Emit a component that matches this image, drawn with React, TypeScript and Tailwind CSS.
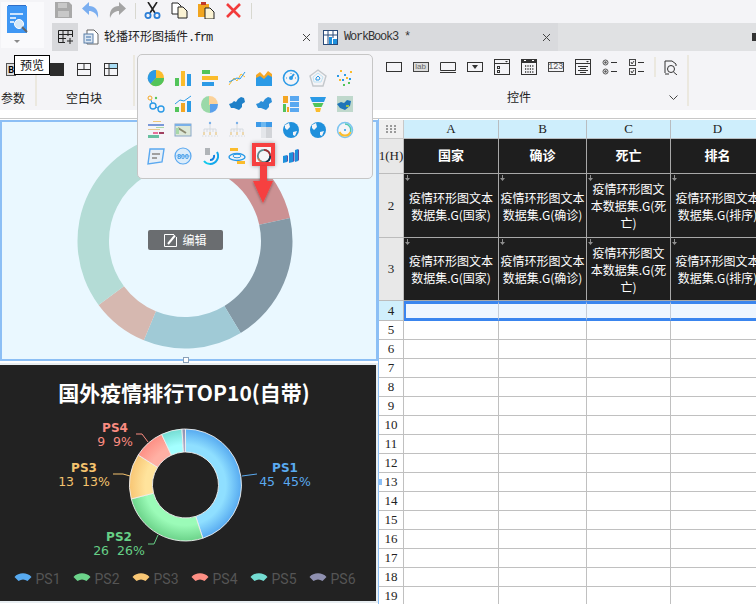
import React from "react";

const CJK = '"Noto Sans CJK SC", sans-serif';

function pt(cx: number, cy: number, r: number, a: number) {
  const t = ((a - 90) * Math.PI) / 180;
  return [cx + r * Math.cos(t), cy + r * Math.sin(t)];
}
function arc(cx: number, cy: number, r0: number, r1: number, a0: number, a1: number) {
  const [x1, y1] = pt(cx, cy, r1, a0);
  const [x2, y2] = pt(cx, cy, r1, a1);
  const [x3, y3] = pt(cx, cy, r0, a1);
  const [x4, y4] = pt(cx, cy, r0, a0);
  const l = a1 - a0 > 180 ? 1 : 0;
  return `M${x1} ${y1}A${r1} ${r1} 0 ${l} 1 ${x2} ${y2}L${x3} ${y3}A${r0} ${r0} 0 ${l} 0 ${x4} ${y4}Z`;
}

const S = ({ children, w = 18, h = 18 }: { children: React.ReactNode; w?: number; h?: number }) => (
  <svg width={w} height={h} viewBox={`0 0 ${w} ${h}`} fill="none" className="block shrink-0">
    {children}
  </svg>
);

const C = { b: "#2b9ae6", g: "#52c45a", y: "#fbbc2c", o: "#f4a623", k: "#333", l: "#5aa8f0" };

const popupIcons: React.ReactNode[] = [
  <S key="1"><circle cx="9" cy="9" r="8" fill={C.y} /><path d="M9 9L9 1A8 8 0 0 0 3.5 15Z" fill={C.b} /><path d="M9 9L3.5 15A8 8 0 0 0 17 9Z" fill={C.g} /></S>,
  <S key="2"><rect x="1" y="9" width="4" height="8" fill={C.g} /><rect x="7" y="2" width="4" height="15" fill={C.y} /><rect x="13" y="5" width="4" height="12" fill={C.b} /></S>,
  <S key="3"><rect x="1" y="1" width="8" height="4" fill={C.g} /><rect x="1" y="7" width="16" height="4" fill={C.y} /><rect x="1" y="13" width="12" height="4" fill={C.b} /></S>,
  <S key="4"><path d="M1 16L6 9L9 12L13 5L17 8" stroke={C.y} /><path d="M1 13L5 11L9 9L12 10L17 3" stroke={C.b} /></S>,
  <S key="5"><path d="M1 6L5 3L9 7L13 2L17 5V11H1Z" fill={C.o} /><path d="M1 9L5 7L9 10L13 6L17 8V17H1Z" fill={C.b} /></S>,
  <S key="6"><circle cx="9" cy="9" r="7.5" stroke={C.b} strokeWidth="1.6" /><path d="M9 9L12 5" stroke={C.b} strokeWidth="2" /><circle cx="9" cy="9" r="2" fill={C.b} /><path d="M4 9H5M13 9H14M9 4V5" stroke={C.b} /></S>,
  <S key="7"><path d="M9 1L17 7L14 17H4L1 7Z" stroke="#c4c8cc" strokeWidth="1.4" /><path d="M9 4L14 8L12 13L5 13L4 8Z" stroke="#bfe2f2" /><path d="M9 7L11 9L10 11H7L7 9Z" stroke={C.b} /></S>,
  <S key="8"><g fill={C.b}><rect x="1" y="6" width="2" height="2" /><rect x="8" y="5" width="2" height="2" /><rect x="6" y="10" width="2" height="2" /><rect x="13" y="9" width="2" height="2" /></g><g fill={C.y}><rect x="4" y="1" width="2" height="2" /><rect x="14" y="2" width="2" height="2" /><rect x="3" y="10" width="2" height="2" /><rect x="10" y="8" width="2" height="2" /></g><g fill={C.g}><rect x="7" y="15" width="2" height="2" /><rect x="12" y="13" width="2" height="2" /></g></S>,
  <S key="9"><circle cx="3" cy="3" r="2" stroke={C.o} /><circle cx="9" cy="3" r="1.2" fill={C.g} /><circle cx="6" cy="11" r="3" stroke={C.b} strokeWidth="1.4" /><circle cx="14" cy="14" r="3" stroke={C.b} strokeWidth="1.4" /><path d="M4 5L5 8M8 12L11 13" stroke={C.b} /></S>,
  <S key="10"><rect x="1" y="12" width="4" height="5" fill={C.g} /><rect x="7" y="8" width="4" height="9" fill={C.o} /><rect x="13" y="6" width="4" height="11" fill={C.b} /><path d="M1 9L6 5L10 6L17 1" stroke={C.b} /></S>,
  <div key="11" className="h-[17px] w-[17px] rounded-full bg-[conic-gradient(#fbd29a_0deg,#fbd29a_90deg,#5aa0ea_90deg,#5aa0ea_180deg,#9ad9a8_180deg,#9ad9a8_360deg)] blur-[0.6px]" />,
  <S key="12"><path d="M1 9L4 8L6 6L8 7L10 4L13 2L16 3L17 7L14 9L14 12L11 15L6 13L3 13Z" fill="#1f80c8" /></S>,
  <S key="13"><path d="M1 9L4 8L6 6L8 7L10 4L13 2L16 3L17 7L14 9L14 12L11 15L6 13L3 13Z" fill="#2b8ed8" /></S>,
  <S key="14"><rect x="1" y="1" width="5" height="7" fill={C.o} /><rect x="1" y="9" width="3" height="8" fill={C.g} /><rect x="5" y="12" width="2" height="5" fill={C.o} /><rect x="8" y="1" width="9" height="5" fill={C.l} /><rect x="8" y="7" width="9" height="5" fill={C.l} /><rect x="8" y="13" width="9" height="4" fill={C.l} /></S>,
  <S key="15"><path d="M1 2H17L15 7H3Z" fill={C.b} /><path d="M3.5 8H14.5L12.5 12H5.5Z" fill={C.g} /><path d="M6 13H12L11 17H7Z" fill={C.y} /></S>,
  <S key="16"><rect x="1" y="1" width="16" height="16" fill="#bfd8cc" /><path d="M1 9L5 7L8 8L11 5L15 6L14 11L9 15L4 13Z" fill="#1f74b8" /><rect x="10" y="10" width="3" height="2" fill="#9bc04a" /></S>,
  <S key="17"><rect x="6" y="0" width="8" height="1" fill="#f0c878" /><rect x="1" y="3" width="16" height="2" fill="#7a98d8" /><rect x="9" y="6" width="8" height="1" fill="#a8d8a8" /><rect x="1" y="8" width="12" height="1" fill="#e8c890" /><rect x="6" y="11" width="5" height="2" fill="#e8709a" /><rect x="12" y="11" width="5" height="2" fill="#a04060" /><rect x="1" y="14" width="11" height="3" fill="#68c0a0" /></S>,
  <S key="18"><rect x="1" y="3" width="16" height="12" fill="#dde8d8" stroke="#8aa8c8" /><rect x="1" y="3" width="16" height="2" fill="#7ab0e8" /><path d="M4 7L12 12" stroke="#8a8a70" strokeWidth="2" /><rect x="2" y="7" width="3" height="6" fill="#a8d8a8" /></S>,
  <S key="19"><g stroke="#cfd6dc" strokeWidth="0.8"><path d="M9 3V7M3 11V8H15V11M9 7V11M6 8V11M12 8V11" /><path d="M1 15H17" strokeDasharray="1.5 1.5" /></g><circle cx="9" cy="2" r="1.2" fill="#7ab0e8" /><g fill="#ecd8b0"><rect x="2" y="11" width="2" height="3" /><rect x="8" y="11" width="2" height="3" /><rect x="14" y="11" width="2" height="3" /></g></S>,
  <S key="20"><g stroke="#cfd6dc" strokeWidth="0.8"><path d="M9 3V7M3 11V8H15V11M9 7V11M6 8V11M12 8V11" /><path d="M1 15H17" strokeDasharray="1.5 1.5" /></g><circle cx="9" cy="2" r="1.2" fill="#7ab0e8" /><g fill="#ecd8b0"><rect x="2" y="11" width="2" height="3" /><rect x="8" y="11" width="2" height="3" /><rect x="14" y="11" width="2" height="3" /></g></S>,
  <S key="21"><rect x="1" y="1" width="16" height="16" fill="#e4e6ea" /><rect x="1" y="1" width="16" height="5" fill="#3d9ae8" /><rect x="6" y="1" width="5" height="5" fill="#6eb8f0" /><rect x="1" y="6" width="5" height="11" fill="#f4f4f7" /><rect x="11" y="6" width="6" height="11" fill="#d2d4d8" /></S>,
  <S key="22"><circle cx="9" cy="9" r="8" fill="#1f90dc" /><path d="M3 4L7 2L8 6L5 9L3 7ZM11 11L15 10L13 15L11 14Z" fill="#f4f4f7" /></S>,
  <S key="23"><circle cx="9" cy="9" r="8" fill="#1f90dc" /><path d="M3 4L7 2L8 6L5 9L3 7ZM11 11L15 10L13 15L11 14Z" fill="#f4f4f7" /></S>,
  <S key="24"><circle cx="9" cy="9" r="7.5" stroke="#7cc4f0" strokeWidth="1.5" /><path d="M3.5 11A6 6 0 0 0 14.5 11" stroke={C.y} strokeWidth="2" /><path d="M14.5 11A6 6 0 0 0 9 3" stroke="#50c8b0" strokeWidth="1.5" /><circle cx="9" cy="9" r="1" fill={C.b} /></S>,
  <S key="25"><path d="M3 2H17L15 15L1 17Z" fill="#e8eff6" stroke={C.l} strokeWidth="1.4" /><rect x="5" y="6" width="8" height="2" fill="#a0a0a0" /><rect x="5" y="10" width="5" height="2" fill="#a0a0a0" /></S>,
  <S key="26"><circle cx="9" cy="9" r="8" stroke={C.l} strokeWidth="1.2" fill="#dbecfa" /><path d="M1 9H17" stroke={C.l} strokeWidth="0.6" /><text x="9" y="12" textAnchor="middle" fontSize="7" fontWeight="700" fill="#3d9ae8" fontFamily="Liberation Sans">800</text></S>,
  <S key="27"><path d="M9 17A8 8 0 0 0 16 5" stroke="#12a8ec" strokeWidth="2" /><path d="M9 17A8 8 0 0 1 3 14" stroke="#12c8ec" strokeWidth="2" /><path d="M9 13A4 4 0 0 0 13 8" stroke="#1280e0" strokeWidth="2" /><rect x="4" y="1" width="5" height="7" fill="#b0b4b8" /></S>,
  <S key="28"><ellipse cx="9" cy="10" rx="8" ry="3.5" stroke="#2b9ae6" strokeWidth="1.4" /><ellipse cx="9" cy="9" rx="4" ry="1.8" stroke="#2b9ae6" /><rect x="2" y="1" width="8" height="3" fill={C.y} /><rect x="9" y="14" width="8" height="3" fill={C.y} /></S>,
  <S key="29"><circle cx="9" cy="9" r="6.2" stroke="#5b8a8e" strokeWidth="1.8" /><path d="M9 2.8A6.2 6.2 0 0 1 15.2 9" stroke="#a02c30" strokeWidth="1.8" /><path d="M15.2 9A6.2 6.2 0 0 1 10.8 15" stroke="#16324a" strokeWidth="1.8" /><path d="M6.5 14.7A6.2 6.2 0 0 1 3.2 11.5" stroke="#c87a50" strokeWidth="1.8" /></S>,
  <S key="30"><path d="M1 9L5 8V15L1 16Z" fill="#1e90dc" /><path d="M7 6L11 5V15L7 16Z" fill="#1e90dc" /><path d="M13 3L16 2V14L13 15Z" fill="#1e90dc" /><path d="M11 5L12.5 6V14L11 15Z" fill="#5a50a8" /><path d="M16 2L17 3V13L16 14Z" fill="#5a50a8" /><path d="M5 8L6 9V14L5 15Z" fill="#5a50a8" /></S>,
];

const ribbonRight: React.ReactNode[] = [
  <S key="a" w={16} h={10}><rect x="0.5" y="0.5" width="15" height="9" stroke={C.k} /></S>,
  <div key="b" className="flex h-[10px] w-4 items-center justify-center border border-[#444] bg-[#ddd] text-[8px] leading-none text-[#666] [font-family:'Liberation_Sans',sans-serif]">lab</div>,
  <S key="c" w={16} h={11}><path d="M0.5 8.5V0.5H15.5V8.5H0.5M0 10.5H16" stroke={C.k} /></S>,
  <S key="d" w={16} h={10}><rect x="0.5" y="0.5" width="15" height="9" stroke={C.k} /><path d="M5 3H11L8 7Z" fill={C.k} /></S>,
  <S key="e" w={16} h={16}><rect x="0.5" y="0.5" width="15" height="15" stroke={C.k} /><path d="M0 4.5H16" stroke={C.k} /><path d="M11 2H14L12.5 3.5Z" fill={C.k} /><rect x="3.5" y="7.5" width="2" height="2" stroke={C.k} /><rect x="3.5" y="11.5" width="2" height="2" stroke={C.k} /></S>,
  <S key="f" w={16} h={16}><rect x="0.5" y="0.5" width="15" height="15" stroke={C.k} /><rect x="0" y="0" width="16" height="4" fill={C.k} /><rect x="3" y="1" width="2" height="1" fill="#fff" /><rect x="11" y="1" width="2" height="1" fill="#fff" /><path d="M4 7H13M4 10H13M4 13H13" stroke={C.k} strokeDasharray="1.2 1.2" strokeWidth="1.4" /></S>,
  <div key="g" className="flex h-[10px] w-4 items-center justify-center border border-[#444] text-[9px] leading-none text-[#555] [font-family:'Liberation_Mono',monospace] tracking-[-0.4px]">123</div>,
  <S key="h" w={16} h={16}><rect x="0.5" y="0.5" width="15" height="15" stroke={C.k} /><path d="M0 4.5H16" stroke={C.k} /><path d="M11 2H14L12.5 3.5Z" fill={C.k} /><path d="M3 7.5H13M5 9.5H11M3 11.5H13M5 13.5H11" stroke={C.k} /></S>,
  <S key="i" w={16} h={16}><circle cx="3.5" cy="3.5" r="2.5" stroke="#555" /><circle cx="3.5" cy="3.5" r="1.2" fill="#555" /><circle cx="3.5" cy="12.5" r="2.5" stroke="#555" /><circle cx="3.5" cy="12.5" r="1.2" fill="#555" /><path d="M9 3.5H15M9 12.5H15" stroke={C.k} /></S>,
  <S key="j" w={16} h={16}><rect x="0.5" y="0.5" width="6" height="6" stroke="#444" /><rect x="0.5" y="9.5" width="6" height="6" stroke="#444" /><path d="M2 3L3 5L5 2M2 12L3 14L5 11" stroke="#444" /><path d="M9 3.5H15M9 12.5H15" stroke={C.k} /></S>,
];

function SheetText({ lines }: { lines: string[] }) {
  return (
    <>
      {lines.map((l) => (
        <div key={l} className="whitespace-nowrap">{l}</div>
      ))}
    </>
  );
}

const Arrow = () => (
  <svg width="5" height="6" viewBox="0 0 5 6" className="absolute left-[1px] top-[1px]">
    <path d="M2 0H3V3H5L2.5 6L0 3H2Z" fill="#8f8f8f" />
  </svg>
);

const mono = "[font-family:'Liberation_Serif','Noto_Sans_CJK_SC',serif] text-[13px] text-[#222]";
const headCell = `flex items-center justify-center border-b border-r border-[#b8bcc0] bg-[#ceeefc] ${mono}`;
const rowHead = `flex items-center justify-center border-b border-r border-[#bcbcbc] bg-[#e8e8e8] ${mono}`;
const darkCell = "relative flex flex-col items-center justify-center border-b border-r border-[#a8a8a8] bg-[#1e1e1e] text-center text-xs leading-[17px] text-white overflow-hidden [font-family:'Noto_Sans_CJK_SC',sans-serif]";
const whiteCell = "border-b border-r border-[#c0c0c0] bg-white";

const row2: string[][] = [
  ["疫情环形图文本", "数据集.G(国家)"],
  ["疫情环形图文本", "数据集.G(确诊)"],
  ["疫情环形图文", "本数据集.G(死", "亡)"],
  ["疫情环形图文本", "数据集.G(排序)"],
];

const segs = [
  { n: "PS1", v: 45, a: "#8fdfff", b: "#57aaf0" },
  { n: "PS2", v: 26, a: "#9bfbb8", b: "#6cd38a" },
  { n: "PS3", v: 13, a: "#ffe39c", b: "#f8c674" },
  { n: "PS4", v: 9, a: "#ffb0a4", b: "#fd8f84" },
  { n: "PS5", v: 6, a: "#a4ffff", b: "#74dcd2" },
  { n: "PS6", v: 1, a: "#a8a8c8", b: "#8f90b0" },
];

function Pie() {
  const cx = 185.5, cy = 120, R = 56, r = 33;
  let acc = 0;
  const labels = [
    { t: "PS1", s: "45  45%", x: 285, y1: 107, y2: 121, c: "#5aaaf0", line: "M242 111L257 109" },
    { t: "PS2", s: "26  26%", x: 119, y1: 176, y2: 190, c: "#66cf86", line: "M158 170L154 179L148 179" },
    { t: "PS3", s: "13  13%", x: 84, y1: 107, y2: 121, c: "#f4c26e", line: "M130 111L123 109L113 109" },
    { t: "PS4", s: "9  9%", x: 115, y1: 67, y2: 81, c: "#f98b80", line: "M148 77L142 69L136 69" },
  ];
  return (
    <svg width="376" height="236" viewBox="0 0 376 236" className="block">
      <defs>
        {segs.map((s, i) => (
          <radialGradient key={s.n} id={`g${i}`} gradientUnits="userSpaceOnUse" cx={cx} cy={cy} r={R}>
            <stop offset="0.58" stopColor={s.a} />
            <stop offset="0.72" stopColor={s.a} />
            <stop offset="1" stopColor={s.b} />
          </radialGradient>
        ))}
      </defs>
      <text x="184" y="36" textAnchor="middle" fill="#fff" fontSize="21" fontWeight="700" fontFamily={CJK}>国外疫情排行TOP10(自带)</text>
      {segs.map((s, i) => {
        const a0 = acc * 3.6;
        acc += s.v;
        return <path key={s.n} d={arc(cx, cy, r, R, a0, acc * 3.6)} fill={`url(#g${i})`} stroke="#eee" strokeWidth="0.9" />;
      })}
      {labels.map((l) => (
        <g key={l.t} fontFamily="DejaVu Sans" fill={l.c} textAnchor="middle">
          <path d={l.line} stroke={l.c} fill="none" />
          <text x={l.x} y={l.y1} fontSize="12" fontWeight="700">{l.t}</text>
          <text x={l.x} y={l.y2} fontSize="12.5" xmlSpace="preserve">{l.s}</text>
        </g>
      ))}
      {segs.map((s, i) => (
        <g key={s.n} transform={`translate(${14.5 + i * 59} 207)`}>
          <path d="M0 5C4 0 13 0 17 5L13 9C10 7 7 7 4 9Z" fill={s.b} />
          <text x="21" y="12" fontSize="14" fill="#555" fontFamily="Roboto">{s.n}</text>
        </g>
      ))}
    </svg>
  );
}

function BigRing() {
  const cx = 183, cy = 119, R = 107.5, r = 76;
  const parts = [
    [0, 77.6, "#cc9193"],
    [77.6, 148.8, "#8499a6"],
    [148.8, 202.5, "#a0cad6"],
    [202.5, 233.5, "#d6b8b0"],
    [233.5, 360, "#b4dcd6"],
  ] as [number, number, string][];
  return (
    <svg width="374" height="237" viewBox="0 0 374 237" className="block">
      {parts.map(([a, b, c]) => (
        <path key={c} d={arc(cx, cy, r, R, a, b)} fill={c} />
      ))}
    </svg>
  );
}

export default function App() {
  return (
    <div className="relative h-[604px] w-[756px] overflow-hidden bg-white [font-family:'Noto_Sans_CJK_SC',sans-serif] text-xs">
      {/* top */}
      <div className="flex h-[51px] bg-[#f4f4f7]">
        <div className="flex w-[52px] shrink-0 pl-px pt-[2px]">
          <div className="flex h-[46px] w-[43px] flex-col items-center bg-[#fafafc] pt-[3px] pr-[11px]">
            <S w={22} h={29}>
              <path d="M1 1H21V28H1Z" fill="#3f97f4" />
              <rect x="2" y="0" width="18" height="1" fill="#2f6fc8" />
              <path d="M4 9H17M4 13H10M4 17H8" stroke="#fff" strokeWidth="1.5" />
              <circle cx="13" cy="19" r="4.5" fill="#d6e8f8" stroke="#fff" />
              <path d="M16 22L21 27" stroke="#666" strokeWidth="2" />
            </S>
            <svg width="6" height="4" viewBox="0 0 6 4" className="mt-[6px]"><path d="M0 0H6L3 3Z" fill="#8a8a8a" /></svg>
          </div>
        </div>
        <div className="flex min-w-0 flex-1 flex-col">
          <div className="flex h-[23px] items-start pt-[2px]">
            <div className="ml-[3px] flex gap-[10px]">
              <S w={17} h={16}><path d="M0 0H14L17 3V16H0Z" fill="#a9a9a9" /><rect x="3" y="1" width="9" height="5" fill="#c8c8c8" /><rect x="3" y="9" width="11" height="6" fill="#c8c8c8" /></S>
              <S w={17} h={16}><path d="M7 0V4C13 4 17 8 16 16C14 11 11 9 7 9V13L0 6.5Z" fill="#7aaef0" /></S>
              <S w={17} h={16}><path d="M10 0V4C4 4 0 8 1 16C3 11 6 9 10 9V13L17 6.5Z" fill="#a4a4a4" /></S>
            </div>
            <div className="ml-[9px] mt-[1px] h-[16px] w-px bg-[#d8d8d0]" />
            <div className="ml-[8px] flex gap-[10px]">
              <S w={17} h={17}><path d="M4 0L11 11M13 0L6 11" stroke="#222" strokeWidth="1.6" /><circle cx="4" cy="13.5" r="2.6" stroke="#2d7fd6" strokeWidth="1.8" /><circle cx="13" cy="13.5" r="2.6" stroke="#2d7fd6" strokeWidth="1.8" /></S>
              <S w={17} h={17}><path d="M1 1H7L10 4V12H1Z" fill="#fff" stroke="#222" /><path d="M7 5H12L16 9V16H7Z" fill="#fbf3d4" stroke="#222" /></S>
              <S w={17} h={17}><rect x="0" y="2" width="11" height="13" fill="#f1a51f" /><rect x="3" y="0" width="5" height="3" fill="#c0392b" /><path d="M7 6H12L16 10V17H7Z" fill="#fbf3d4" stroke="#222" /></S>
              <S w={17} h={17}><path d="M2 2L15 15M15 2L2 15" stroke="#f23b3b" strokeWidth="2.6" /></S>
            </div>
            <div className="ml-[9px] mt-[1px] h-[16px] w-px bg-[#d8d8d0]" />
          </div>
          <div className="flex h-[28px] bg-[#e0e1e3]">
            <div className="flex w-[26px] items-center justify-center bg-[#d8d9dc]">
              <S w={15} h={14}><path d="M0.5 0.5H14.5V7M0.5 0.5V12.5H7M5 0V12M10 0V6M0 4.5H15M0 8.5H8" stroke="#222" /><path d="M9 11H15M12 8V14" stroke="#222" /></S>
            </div>
            <div className="flex w-[240px] items-center bg-[#f4f4f7] pl-[5px]">
              <S w={16} h={16}><path d="M4 1H11L15 5V15H4Z" fill="#fff" stroke="#666" /><rect x="1" y="5" width="9" height="9" fill="#dbe6f2" stroke="#5a7fa8" /><path d="M3 8H8M3 11H8" stroke="#3a6ea8" /></S>
              <span className="ml-[5px] text-xs text-[#222]">轮播环形图插件<span className="[font-family:'Liberation_Mono',monospace] tracking-[-1.2px]">.frm</span></span>
              <svg width="9" height="9" viewBox="0 0 9 9" className="ml-auto mr-[7px]"><path d="M1 1L8 8M8 1L1 8" stroke="#444" /></svg>
            </div>
            <div className="flex w-[240px] items-center bg-[#d9dadd] pl-[5px]">
              <S w={15} h={15}><rect x="0.5" y="0.5" width="14" height="14" fill="#fff" stroke="#2a4a78" /><path d="M5 0V15M10 0V8M0 5H15" stroke="#2a4a78" /><rect x="6" y="7" width="3" height="7" fill="#1f90dc" /><rect x="10" y="9" width="4" height="5" fill="#1f90dc" /></S>
              <span className="ml-[6px] text-xs text-[#333] [font-family:'Liberation_Mono',monospace] tracking-[-1.2px] whitespace-pre">WorkBook3 *</span>
              <svg width="9" height="9" viewBox="0 0 9 9" className="ml-auto mr-[7px]"><path d="M1 1L8 8M8 1L1 8" stroke="#444" /></svg>
            </div>
            <div className="flex flex-1 items-center justify-end">
              <div className="mr-[-4px] h-[8px] w-[8px] bg-[#333]" />
            </div>
          </div>
        </div>
      </div>

      {/* ribbon */}
      <div className="flex h-[59px] bg-[#f4f4f7]">
        <div className="flex w-[35px] flex-col justify-between pb-[6px] pt-[12px]">
          <div className="ml-[6px] flex h-[13px] w-[10px] items-center justify-center border border-[#555] bg-[#ddd] text-[9px] font-bold leading-none">B</div>
          <div className="pl-px text-xs leading-none text-[#222]">参数</div>
        </div>
        <div className="my-[4px] w-[2px] bg-[#ebe8df]" />
        <div className="flex w-[96px] flex-col justify-between pb-[6px] pt-[12px]">
          <div className="flex items-center">
            <div className="ml-[13px] h-[13px] w-[14px] bg-[#2c2c2c]" />
            <div className="ml-[13px]"><S w={14} h={13}><rect x="0.5" y="0.5" width="13" height="12" stroke={C.k} /><path d="M0 6.5H14M7 0V6" stroke={C.k} /></S></div>
            <div className="ml-[13px]"><S w={14} h={13}><rect x="0.5" y="0.5" width="13" height="12" stroke={C.k} /><rect x="5" y="1" width="8" height="4" fill="#a8dcf4" /><path d="M0 5.5H14M5 0V13" stroke={C.k} /></S></div>
          </div>
          <div className="pl-[29px] text-xs leading-none text-[#222]">空白块</div>
        </div>
        <div className="my-[4px] w-[2px] bg-[#ebe8df]" />
        <div className="flex w-[552px] flex-col justify-between pb-[6px] pt-[8px]">
          <div className="flex h-[16px] items-center pl-[245px]">
            {ribbonRight.map((ic, i) => (
              <div key={i} className="flex w-[27px] shrink-0 items-center justify-center">{ic}</div>
            ))}
            <div className="ml-[4px] h-[20px] w-[2px] bg-[#ebe8df]" />
            <div className="ml-[8px]"><S w={14} h={15}><path d="M1 13V1H8L12 4V6" stroke={C.k} /><circle cx="7" cy="9" r="3.5" stroke={C.k} /><path d="M9.5 12L13 15M1 14H5" stroke={C.k} /></S></div>
          </div>
          <div className="relative h-[14px]">
            <div className="absolute left-[372px] top-[1px] text-xs leading-none text-[#222]">控件</div>
            <svg width="9" height="5" viewBox="0 0 9 5" className="absolute left-[534px] top-[5px]"><path d="M0.5 0.5L4.5 4.5L8.5 0.5" stroke="#444" fill="none" /></svg>
          </div>
        </div>
        <div className="my-[4px] w-[2px] bg-[#ebe8df]" />
      </div>

      <div className="h-[8px] bg-white" />
      <div className="h-px bg-[#c8c8c8]" />

      {/* main */}
      <div className="flex">
        <div className="flex w-[378px] shrink-0 flex-col">
          <div className="relative mt-px h-[241px] border-2 border-[#8cbff5] bg-[#eaf8ff]">
            <BigRing />
            <div className="absolute left-[146px] top-[108px] flex h-5 w-[75px] items-center justify-center gap-[5px] rounded-[2px] bg-[#6a6d70] text-xs text-white">
              <S w={13} h={13}><path d="M10 0.5H0.5V12.5H12.5V3" stroke="#fff" /><path d="M4 10L11 1.5" stroke="#fff" strokeWidth="2" /></S>
              <span className="leading-none">编辑</span>
            </div>
            <div className="absolute bottom-[-4px] left-[181px] h-[6px] w-[6px] border border-[#8aa0b8] bg-white" />
          </div>
          <div className="mt-[2px] h-[240px] border-y-2 border-r-2 border-[#e8eef2] bg-[#222222]">
            <Pie />
          </div>
        </div>

        {/* sheet */}
        <div className="relative ml-0 flex-1 border-l-[1px] border-[#8cbff5] pt-px">
          <div className="grid grid-cols-[25px_95px_88px_84px_94px] grid-rows-[19px_35px_64px_63px_20px] auto-rows-[19px]">
            <div className="flex items-center justify-center border-b border-r border-[#c8c8c8] bg-[#f0f0f0]">
              <svg width="10" height="8" viewBox="0 0 10 8"><g fill="#9a9a9a"><rect width="2" height="2" /><rect x="4" width="2" height="2" /><rect x="8" width="2" height="2" /><rect y="3" width="2" height="2" /><rect x="4" y="3" width="2" height="2" /><rect x="8" y="3" width="2" height="2" /><rect y="6" width="2" height="2" /><rect x="4" y="6" width="2" height="2" /><rect x="8" y="6" width="2" height="2" /></g></svg>
            </div>
            {["A", "B", "C", "D"].map((c) => <div key={c} className={headCell}>{c}</div>)}

            <div className={rowHead}>1(H)</div>
            {["国家", "确诊", "死亡", "排名"].map((t) => (
              <div key={t} className={`${darkCell} pb-[3px] text-[13px] font-bold`}>{t}</div>
            ))}

            <div className={rowHead}>2</div>
            {row2.map((l, i) => <div key={i} className={darkCell}><Arrow /><SheetText lines={l} /></div>)}
            <div className={rowHead}>3</div>
            {row2.map((l, i) => <div key={i} className={darkCell}><Arrow /><SheetText lines={l} /></div>)}

            <div className={`flex items-center justify-center border-b border-r border-[#bcbcbc] bg-[#d0effc] ${mono}`}>4</div>
            <div className="border-y-[3px] border-l-[2px] border-r border-[#3a85ee] border-r-[#c4ccd8] bg-[#eef6ff]" />
            <div className="border-y-[3px] border-r border-[#3a85ee] border-r-[#c4ccd8] bg-[#eef6ff]" />
            <div className="border-y-[3px] border-r border-[#3a85ee] border-r-[#c4ccd8] bg-[#eef6ff]" />
            <div className="border-y-[3px] border-r border-[#3a85ee] border-r-[#c4ccd8] bg-[#eef6ff]" />

            {Array.from({ length: 15 }, (_, i) => i + 5).map((n) => (
              <React.Fragment key={n}>
                <div className={`flex items-center justify-center border-b border-r border-[#c0c0c0] bg-white ${mono}`}>{n}</div>
                <div className={whiteCell} /><div className={whiteCell} /><div className={whiteCell} /><div className={whiteCell} />
              </React.Fragment>
            ))}
          </div>
          <div className="absolute left-[-1px] top-[360px] h-[6px] w-[4px] bg-[#8cbff5]" />
        </div>
      </div>

      {/* tooltip */}
      <div className="absolute left-[14px] top-[55px] flex h-5 w-9 items-center justify-center border border-black bg-white text-xs leading-none text-[#111]">预览</div>

      {/* chart popup */}
      <div className="absolute left-[137px] top-[54px] h-[125px] w-[236px] rounded-[5px] border border-[#c6c6c6] bg-[#f4f4f7] pl-[4px] pt-[10px]">
        <div className="grid grid-cols-[repeat(8,27px)] auto-rows-[26px] blur-[0.3px]">
          {popupIcons.map((ic, i) => (
            <div key={i} className="flex items-center justify-center">{ic}</div>
          ))}
        </div>
      </div>
      <div className="absolute left-[252px] top-[143px] h-[23px] w-[23px] border-[4px] border-[#f64040] shadow-[0_0_4px_rgba(0,0,0,0.35)]" />
      <svg width="32" height="44" viewBox="0 0 32 44" className="absolute left-[247px] top-[164px]">
        <defs><filter id="sh" x="-30%" y="-30%" width="160%" height="160%"><feDropShadow dx="0" dy="1" stdDeviation="1.5" floodColor="#000" floodOpacity="0.4" /></filter></defs>
        <path d="M13 2H20V17H26L16 39L6 17H13Z" fill="#f64040" filter="url(#sh)" />
      </svg>
    </div>
  );
}
